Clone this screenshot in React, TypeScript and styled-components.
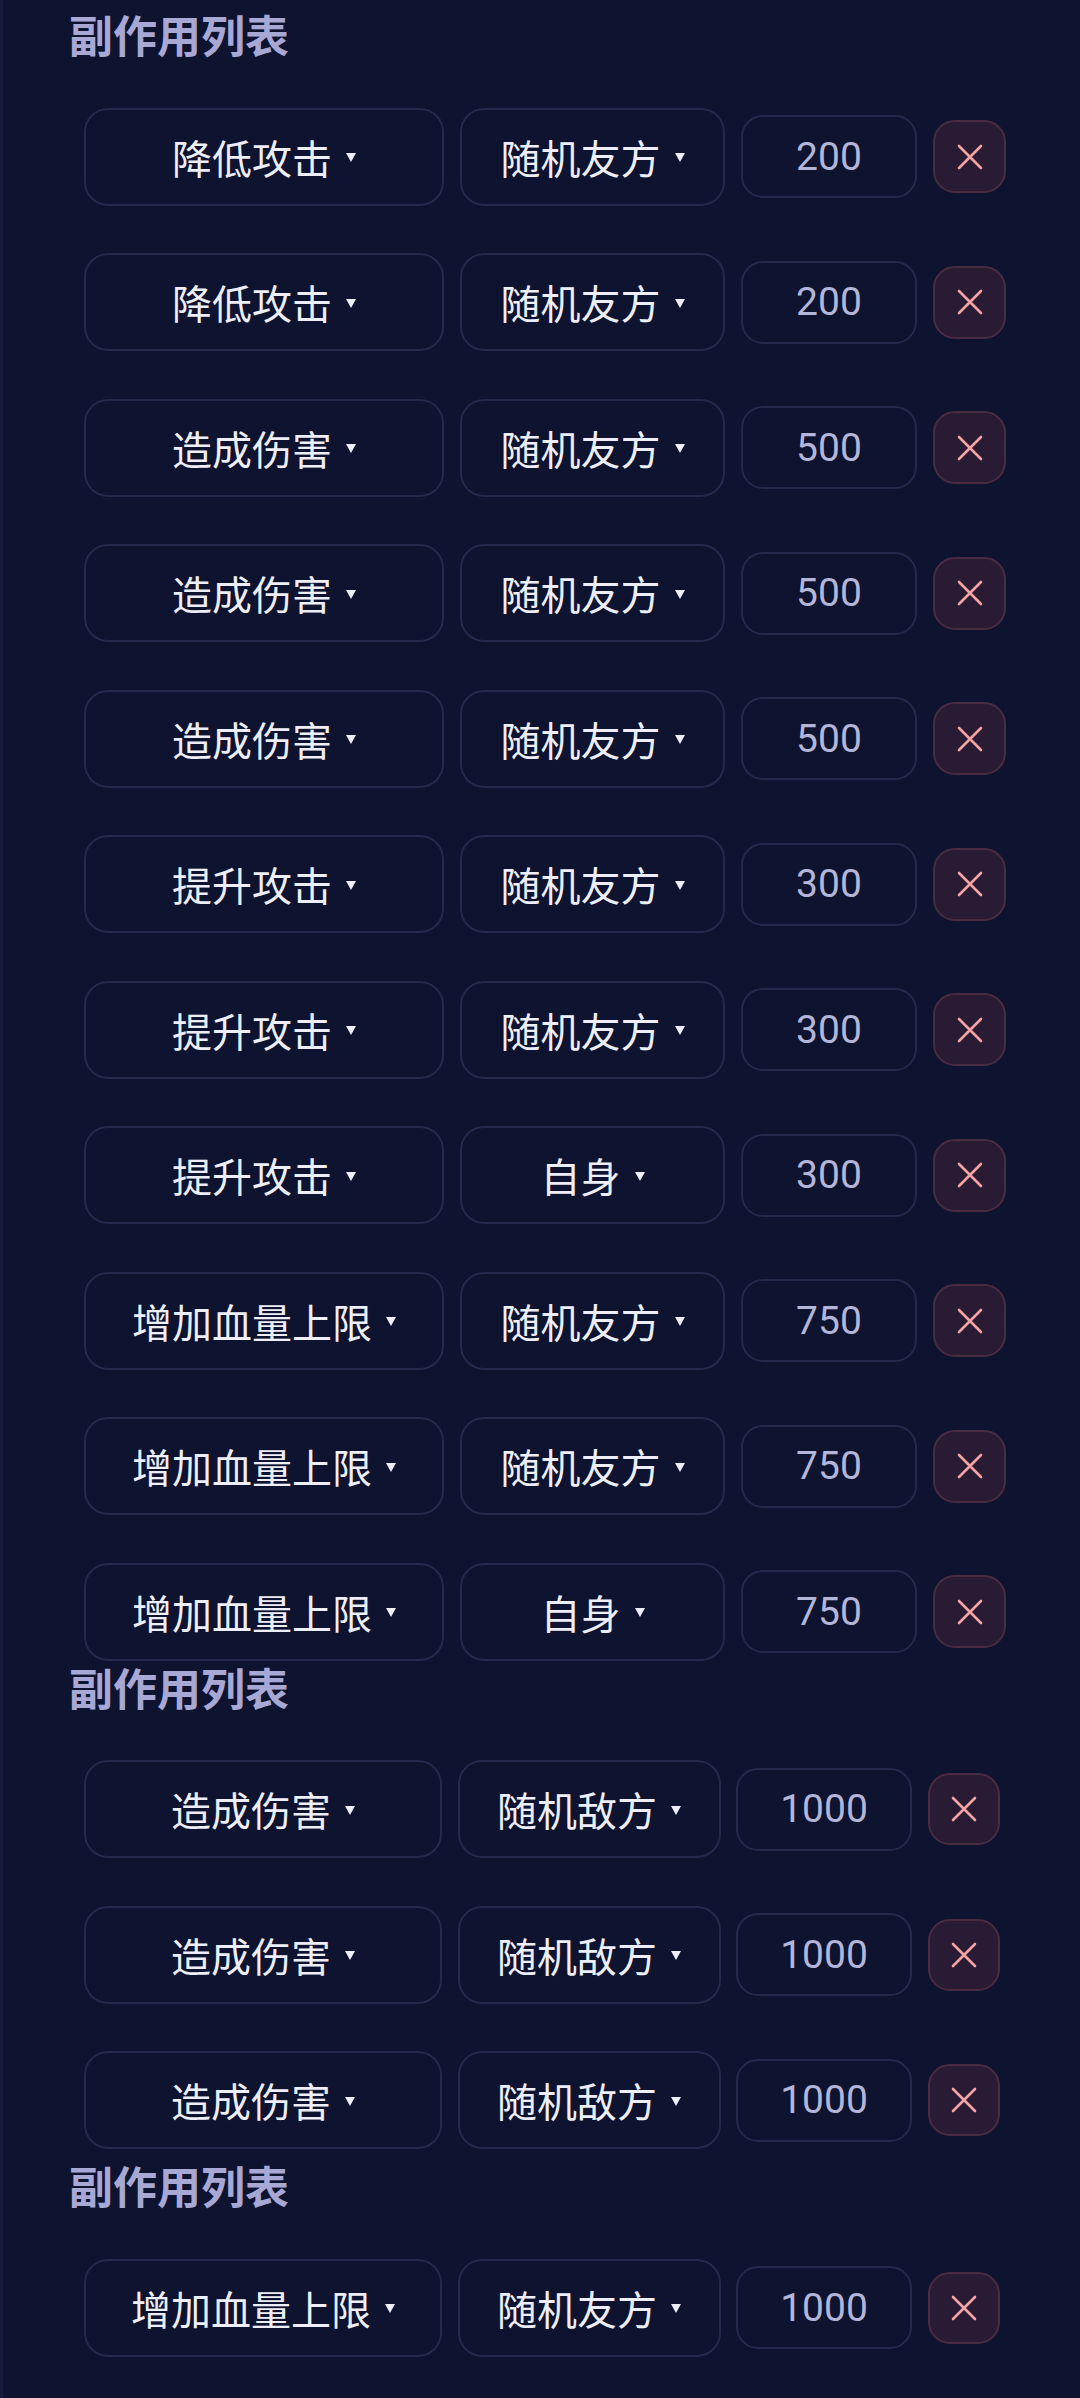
import styled, { createGlobalStyle } from "styled-components";

const GlobalStyle = createGlobalStyle`
  html, body {
    margin: 0;
    padding: 0;
    background-color: #0e1330;
  }
  * {
    box-sizing: border-box;
  }
`;

const StyledPage = styled.div`
  width: 1080px;
  min-height: 2398px;
  background-color: #0e1330;
  border-left: 3px solid #161c3c;
  padding-top: 8px;
  font-family: "Noto Sans CJK SC", "Noto Sans", sans-serif;
`;

// *** section -> start ***

const StyledSection = styled.section<{ $top: number }>`
  display: flex;
  flex-direction: column;
  gap: 47.5px;
  margin-top: ${(props) => props.$top}px;
`;

const StyledSectionTitle = styled.div`
  padding-left: 66px;
  height: 52px;
  line-height: 52px;
  font-size: 44px;
  font-weight: 700;
  color: #a7a8d4;
`;

// *** section -> end ***

// *** row -> start ***

const StyledRow = styled.div<{ $gap: number }>`
  display: flex;
  align-items: center;
  gap: ${(props) => props.$gap}px;
  padding-left: 81px;
  height: 98px;
`;

const StyledSelect = styled.div<{ $width: number }>`
  width: ${(props) => props.$width}px;
  height: 98px;
  display: flex;
  align-items: center;
  justify-content: center;
  gap: 14px;
  border: 2px solid #232a4b;
  border-radius: 24px;
  color: #eeeef8;
  font-size: 40px;
  line-height: 1;
`;

const StyledCaret = styled.span`
  width: 0;
  height: 0;
  border-left: 5px solid transparent;
  border-right: 5px solid transparent;
  border-top: 9px solid #eeeef8;
  margin-top: 2px;
`;

const StyledNumber = styled.div<{ $width: number }>`
  width: ${(props) => props.$width}px;
  height: 83px;
  display: flex;
  align-items: center;
  justify-content: center;
  border: 2px solid #232a4b;
  border-radius: 22px;
  color: #b3b6d8;
  font-family: Roboto, "Liberation Sans", sans-serif;
  font-size: 39px;
`;

const StyledDeleteButton = styled.div<{ $size: number }>`
  width: ${(props) => props.$size}px;
  height: ${(props) => props.$size}px;
  display: flex;
  align-items: center;
  justify-content: center;
  border: 2px solid #4a2c42;
  border-radius: 22px;
  background-color: #291b33;
  color: #f3a3a4;
`;

// *** row -> end ***

type Effect = {
  kind: string;
  target: string;
  value: number;
};

type RowSizes = {
  kind: number;
  target: number;
  value: number;
  remove: number;
  gap: number;
};

const wide: RowSizes = { kind: 360, target: 265, value: 176, remove: 73, gap: 16 };
const narrow: RowSizes = { kind: 358, target: 263, value: 176, remove: 72, gap: 15.5 };

const sections: { top: number; sizes: RowSizes; effects: Effect[] }[] = [
  {
    top: 0,
    sizes: wide,
    effects: [
      { kind: "降低攻击", target: "随机友方", value: 200 },
      { kind: "降低攻击", target: "随机友方", value: 200 },
      { kind: "造成伤害", target: "随机友方", value: 500 },
      { kind: "造成伤害", target: "随机友方", value: 500 },
      { kind: "造成伤害", target: "随机友方", value: 500 },
      { kind: "提升攻击", target: "随机友方", value: 300 },
      { kind: "提升攻击", target: "随机友方", value: 300 },
      { kind: "提升攻击", target: "自身", value: 300 },
      { kind: "增加血量上限", target: "随机友方", value: 750 },
      { kind: "增加血量上限", target: "随机友方", value: 750 },
      { kind: "增加血量上限", target: "自身", value: 750 },
    ],
  },
  {
    top: 0,
    sizes: narrow,
    effects: [
      { kind: "造成伤害", target: "随机敌方", value: 1000 },
      { kind: "造成伤害", target: "随机敌方", value: 1000 },
      { kind: "造成伤害", target: "随机敌方", value: 1000 },
    ],
  },
  {
    top: 10,
    sizes: narrow,
    effects: [{ kind: "增加血量上限", target: "随机友方", value: 1000 }],
  },
];

const CloseIcon = () => (
  <svg width="26" height="26" viewBox="0 0 26 26" fill="none">
    <path d="M2 2L24 24M24 2L2 24" stroke="currentColor" strokeWidth="2.6" strokeLinecap="round" />
  </svg>
);

const EffectRow = ({ effect, sizes }: { effect: Effect; sizes: RowSizes }) => {
  return (
    <StyledRow $gap={sizes.gap}>
      <StyledSelect $width={sizes.kind}>
        <span>{effect.kind}</span>
        <StyledCaret />
      </StyledSelect>
      <StyledSelect $width={sizes.target}>
        <span>{effect.target}</span>
        <StyledCaret />
      </StyledSelect>
      <StyledNumber $width={sizes.value}>{effect.value}</StyledNumber>
      <StyledDeleteButton $size={sizes.remove}>
        <CloseIcon />
      </StyledDeleteButton>
    </StyledRow>
  );
};

const App = () => {
  return (
    <>
      <GlobalStyle />
      <StyledPage>
        {sections.map((section, i) => (
          <StyledSection key={i} $top={section.top}>
            <StyledSectionTitle>副作用列表</StyledSectionTitle>
            {section.effects.map((effect, j) => (
              <EffectRow key={j} effect={effect} sizes={section.sizes} />
            ))}
          </StyledSection>
        ))}
      </StyledPage>
    </>
  );
};

export default App;
